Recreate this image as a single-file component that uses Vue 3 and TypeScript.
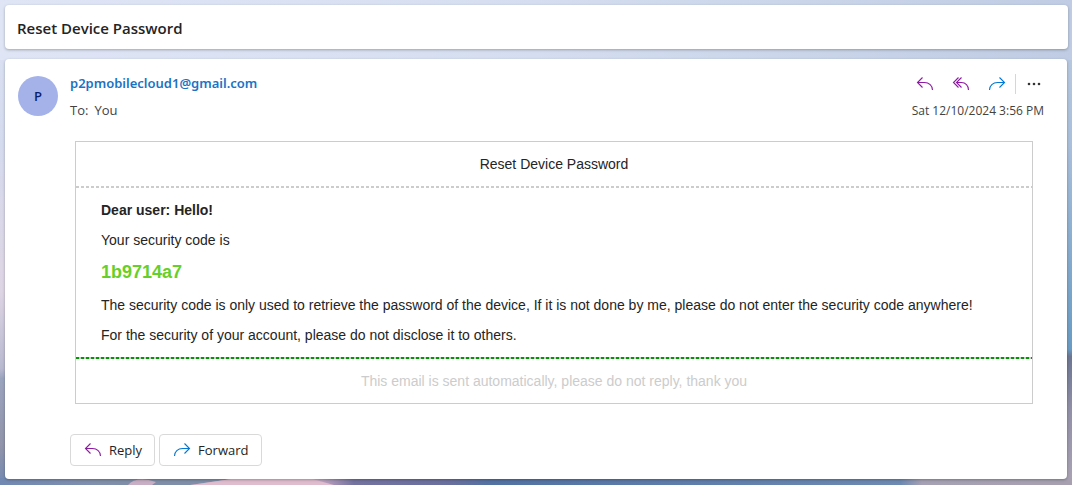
<script setup lang="ts">
const paragraphs: string[] = [
  'The security code is only used to retrieve the password of the device, If it is not done by me, please do not enter the security code anywhere!',
  'For the security of your account, please do not disclose it to others.',
]
</script>

<template>
  <main class="app">
    <svg class="scenery" viewBox="0 0 1072 485" preserveAspectRatio="none" aria-hidden="true">
      <defs>
        <linearGradient id="left" x1="0" y1="0" x2="0" y2="1">
          <stop offset="0" stop-color="#dce3f4" />
          <stop offset="0.3" stop-color="#d5dbee" />
          <stop offset="0.6" stop-color="#ded5e4" />
          <stop offset="0.76" stop-color="#b8b9d0" />
          <stop offset="0.78" stop-color="#9ba4be" />
          <stop offset="0.92" stop-color="#9194aa" />
          <stop offset="1" stop-color="#7289b1" />
        </linearGradient>
        <linearGradient id="right" x1="0" y1="0" x2="0" y2="1">
          <stop offset="0" stop-color="#bfcce3" />
          <stop offset="0.3" stop-color="#a9bfdb" />
          <stop offset="0.72" stop-color="#689bc4" />
          <stop offset="0.735" stop-color="#6c7693" />
          <stop offset="0.85" stop-color="#9290a8" />
          <stop offset="1" stop-color="#aaa3b4" />
        </linearGradient>
        <linearGradient id="top" x1="0" y1="0" x2="1" y2="0">
          <stop offset="0" stop-color="#dfe5f5" />
          <stop offset="0.5" stop-color="#d5def0" />
          <stop offset="1" stop-color="#bfcce3" />
        </linearGradient>
        <linearGradient id="bottom" x1="0" y1="0" x2="1" y2="0">
          <stop offset="0" stop-color="#7189b2" />
          <stop offset="0.1" stop-color="#8190ae" />
          <stop offset="0.18" stop-color="#8795ae" />
          <stop offset="0.21" stop-color="#e0bccf" />
          <stop offset="0.29" stop-color="#d9b5cc" />
          <stop offset="0.33" stop-color="#7473a0" />
          <stop offset="0.42" stop-color="#696f9d" />
          <stop offset="0.46" stop-color="#5272a3" />
          <stop offset="0.84" stop-color="#6d8ab2" />
          <stop offset="0.86" stop-color="#a6a1b4" />
          <stop offset="1" stop-color="#a6a0b1" />
        </linearGradient>
      </defs>
      <rect width="536" height="485" fill="url(#left)" />
      <rect x="536" width="536" height="485" fill="url(#right)" />
      <rect width="1072" height="60" fill="url(#top)" />
      <rect y="478" width="1072" height="7" fill="url(#bottom)" />
      <path d="M58 479H232L190 485H120Z" fill="#808fa9" />
      <path d="M128 485q8-9 28-3l-4 3Z" fill="#c9afc5" />
      <path d="M190 485l42-6h80l22 6Z" fill="#e0bccf" />
    </svg>

    <header class="card subject">
      <h1>Reset Device Password</h1>
    </header>

    <article class="card message">
      <div class="avatar" aria-hidden="true">P</div>
      <div class="content">
        <div class="top">
          <div class="people">
            <a class="sender" href="mailto:p2pmobilecloud1@gmail.com">p2pmobilecloud1@gmail.com</a>
            <div class="to"><span>To:</span><span>You</span></div>
          </div>
          <div class="side">
            <div class="tools">
              <button class="tool" type="button" aria-label="Reply">
                <svg class="icon purple" viewBox="0 0 18 16"><path d="M6.5 1.5L1.5 6.5L6.5 11.5M1.8 6.5H8.5C13 6.5 16.5 9.5 16.5 14" /></svg>
              </button>
              <button class="tool" type="button" aria-label="Reply all">
                <svg class="icon purple" viewBox="0 0 18 16"><path d="M6.5 1.5L1.5 6.5L6.5 11.5M9.5 1.5L4.5 6.5L9.5 11.5M4.7 6.5H9.5C13.5 6.5 16.5 9.5 16.5 14" /></svg>
              </button>
              <button class="tool" type="button" aria-label="Forward">
                <svg class="icon blue" viewBox="0 0 18 16"><path d="M11.5 1.5L16.5 6.5L11.5 11.5M16.2 6.5H9.5C5 6.5 1.5 9.5 1.5 14" /></svg>
              </button>
              <span class="divider"></span>
              <button class="tool" type="button" aria-label="More actions">
                <svg class="icon dots" viewBox="0 0 18 16"><circle cx="4" cy="8" r="1.3" /><circle cx="9" cy="8" r="1.3" /><circle cx="14" cy="8" r="1.3" /></svg>
              </button>
            </div>
            <time datetime="2024-10-12T15:56">Sat 12/10/2024 3:56 PM</time>
          </div>
        </div>

        <section class="mail">
          <h2>Reset Device Password</h2>
          <div class="body">
            <p><strong>Dear user: Hello!</strong></p>
            <p>Your security code is</p>
            <p class="code">1b9714a7</p>
            <p v-for="text in paragraphs" :key="text">{{ text }}</p>
          </div>
          <footer>This email is sent automatically, please do not reply, thank you</footer>
        </section>

        <div class="actions">
          <button class="action" type="button">
            <svg class="icon purple" viewBox="0 0 18 16" aria-hidden="true"><path d="M6.5 1.5L1.5 6.5L6.5 11.5M1.8 6.5H8.5C13 6.5 16.5 9.5 16.5 14" /></svg>
            Reply
          </button>
          <button class="action" type="button">
            <svg class="icon blue" viewBox="0 0 18 16" aria-hidden="true"><path d="M11.5 1.5L16.5 6.5L11.5 11.5M16.2 6.5H9.5C5 6.5 1.5 9.5 1.5 14" /></svg>
            Forward
          </button>
        </div>
      </div>
    </article>
  </main>
</template>

<style>
body {
  margin: 0;
}
</style>

<style scoped>
.app {
  position: relative;
  box-sizing: border-box;
  min-height: 100vh;
  padding: 5px 5px 6px;
  display: flex;
  flex-direction: column;
  gap: 10px;
  font-family: "Open Sans", "Noto Sans", sans-serif;
  font-size: 13px;
  color: #242424;
}
.scenery {
  position: absolute;
  inset: 0;
  width: 100%;
  height: 100%;
}
.card {
  position: relative;
  background: #fff;
  border-radius: 4px;
  box-shadow: 0 1px 3px rgba(0, 0, 0, 0.28);
}
.subject {
  margin-right: -1px;
  padding: 13px 12px 11px;
}
h1 {
  margin: 0;
  font-size: 15px;
  line-height: 20px;
  font-weight: 600;
}
.message {
  display: flex;
  gap: 12px;
  padding: 13px 23px 13px 13px;
}
.avatar {
  flex: none;
  width: 40px;
  height: 40px;
  margin-top: 4px;
  border-radius: 50%;
  background: #a4b2e9;
  color: #0c1e6e;
  font-size: 13px;
  font-weight: 600;
  line-height: 40px;
  text-align: center;
}
.content {
  flex: 1;
  min-width: 0;
}
.top {
  display: flex;
  justify-content: space-between;
}
.sender {
  display: block;
  color: #1a73c4;
  font-family: "Noto Sans", "Open Sans", sans-serif;
  font-size: 13px;
  font-weight: 600;
  line-height: 22px;
  text-decoration: none;
}
.to {
  display: flex;
  gap: 6px;
  margin-top: 6px;
  line-height: 20px;
  color: #424242;
}
.side {
  display: flex;
  flex-direction: column;
  align-items: flex-end;
}
.tools {
  display: flex;
  align-items: center;
}
button {
  font: inherit;
  color: inherit;
  cursor: pointer;
}
.tool {
  display: flex;
  padding: 4px 9px;
  border: 0;
  background: none;
}
.tool:last-child {
  padding-right: 1px;
}
.icon {
  width: 18px;
  height: 16px;
  fill: none;
  stroke-width: 1.1;
}
.purple {
  stroke: #8e1aa3;
}
.blue {
  stroke: #0078d4;
}
.dots {
  fill: #333;
}
.divider {
  width: 1px;
  height: 20px;
  background: #d6d6d6;
}
time {
  margin-top: 5px;
  font-size: 12px;
  line-height: 20px;
  color: #424242;
}
.mail {
  margin: 20px 11px 30px 5px;
  border: 1px solid #ccc;
  font: 14px/20px "Liberation Sans", Arial, sans-serif;
}
h2 {
  margin: 0;
  padding: 12px 25px 14px;
  background: repeating-linear-gradient(90deg, #ccc 0 3px, transparent 3px 5px) bottom / 100% 2px no-repeat;
  font: inherit;
  text-align: center;
}
.body {
  padding: 12px 25px 14px;
  background: repeating-linear-gradient(90deg, #090 0 3px, #ccc 3px 5px) bottom / 100% 2px no-repeat;
}
.body p {
  margin: 0 0 10px;
}
.body p:last-child {
  margin-bottom: 0;
}
.body .code {
  margin: 12px 0 13px;
  color: #66d029;
  font-size: 18px;
  font-weight: 700;
}
footer {
  padding: 12px 25px;
  color: #ccc;
  text-align: center;
}
.actions {
  display: flex;
  gap: 4px;
}
.action {
  display: flex;
  align-items: center;
  gap: 7px;
  height: 32px;
  padding: 0 12px 0 13px;
  border: 1px solid #d9d9d9;
  border-radius: 4px;
  background: #fff;
}
</style>
